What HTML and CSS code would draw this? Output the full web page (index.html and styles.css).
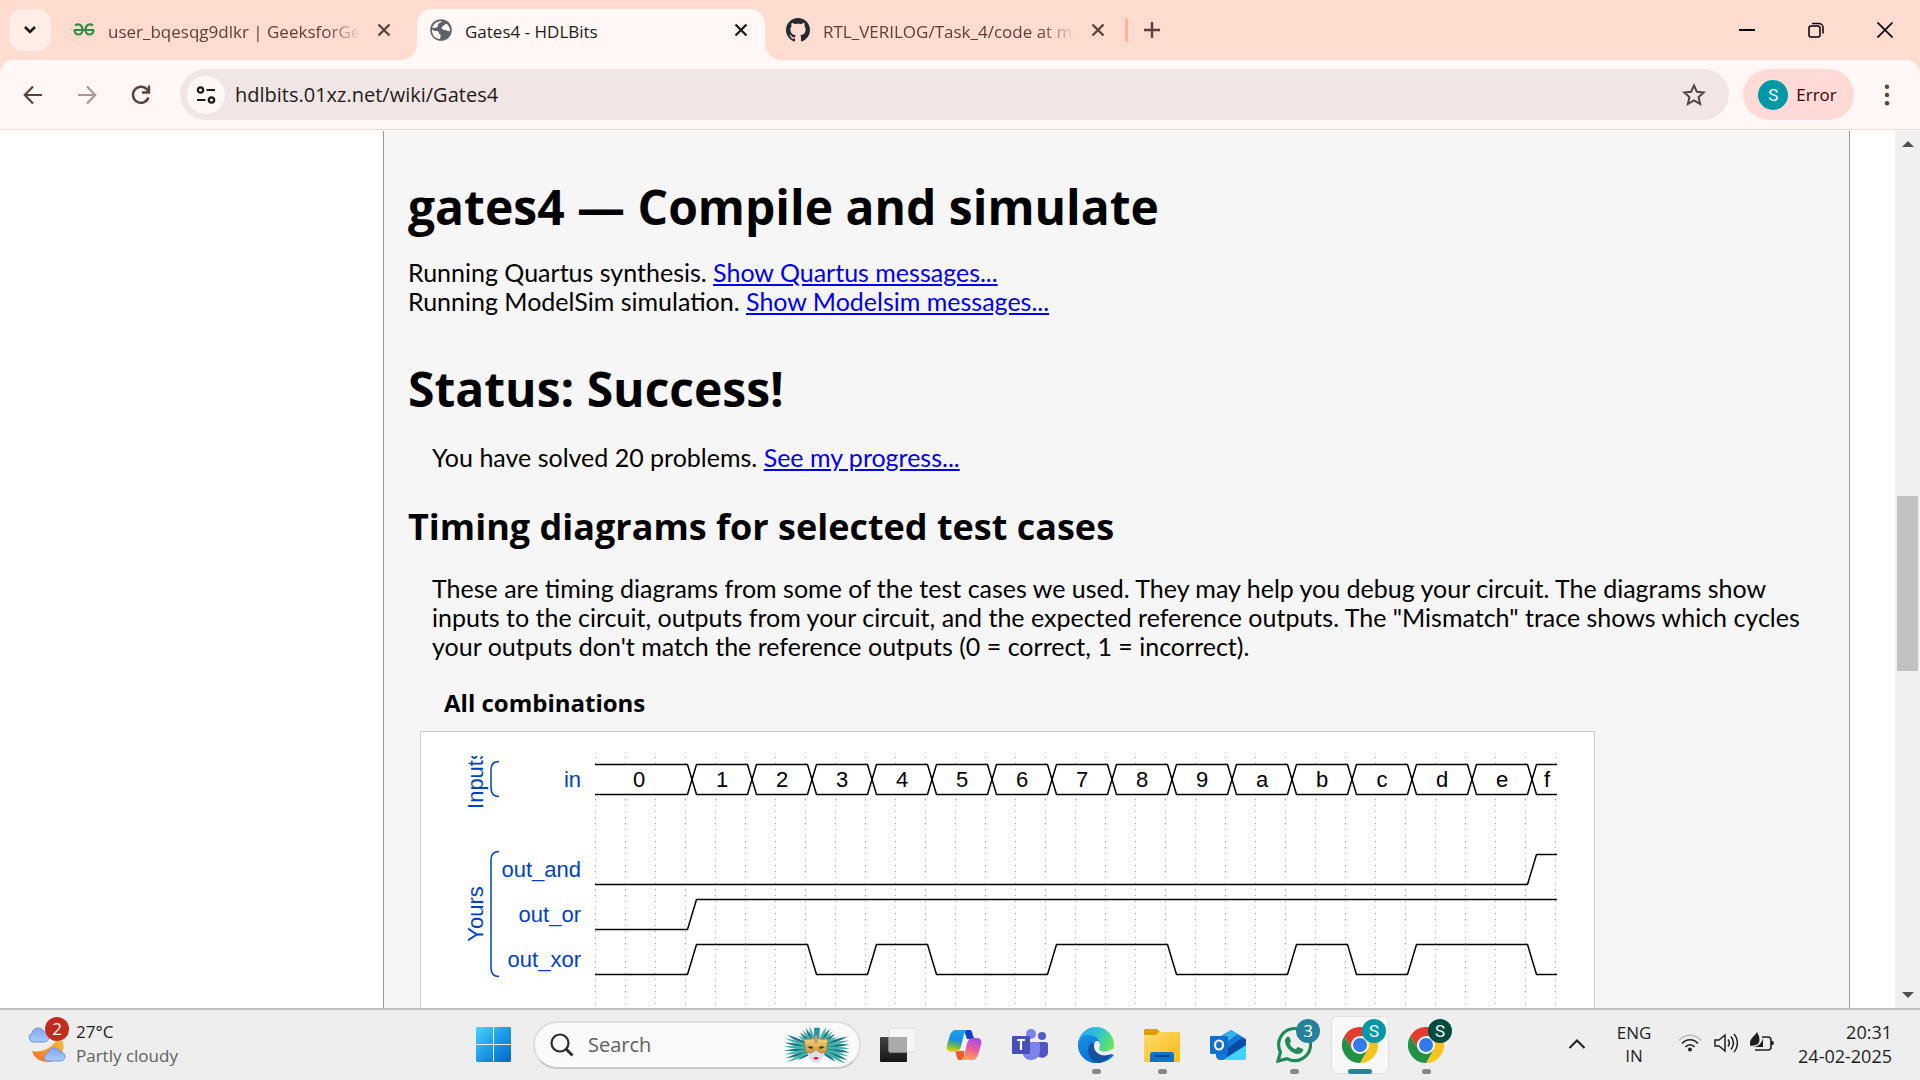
FILE: index.html
```html
<!DOCTYPE html>
<html lang="en">
<head>
<meta charset="utf-8">
<title>Gates4 - HDLBits</title>
<link rel="stylesheet" href="styles.css">
</head>
<body>
<div class="desktop">
  <header class="tabstrip">
    <button class="tab-search" aria-label="Search tabs"><svg width="14" height="10" viewBox="0 0 14 10"><path d="M2 2l5 5 5-5" fill="none" stroke="#1f1a18" stroke-width="2.6"/></svg></button>
    <div class="tab tab-first">
      <svg class="favicon" width="22" height="22" viewBox="0 0 22 22"><g fill="none" stroke="#2f8d46" stroke-width="2.2"><path d="M1 11h20M2 6.500C5 4 9.500 5.500 9.500 11c0 6-8 6-8 0M20 6.500C17 4 12.500 5.500 12.500 11c0 6 8 6 8 0"/></g></svg>
      <span class="tab-title">user_bqesqg9dlkr | GeeksforGeeks</span>
      <button class="tab-close" aria-label="Close tab"><svg width="14" height="14" viewBox="0 0 14 14"><path d="M1.500 1.500l11 11M12.500 1.500l-11 11" stroke="currentColor" stroke-width="2.300"/></svg></button>
    </div>
    <div class="tab tab-active">
      <svg class="favicon" width="22" height="22" viewBox="0 0 22 22"><circle cx="11" cy="11" r="10.800" fill="#5f6368"/><path d="M12 2c-1 2-4 2-4 4s-1 2-3 3l-3 0c0 3 3 3 5 3s2 2 2 3c2 0 2 2 1 5C5 20 2 16 2 11 2 6 6 2 12 2zM17 5c2 2 3 4 3 7-2 1-3-1-5-1s-4-1-3-3 3-1 3-3z" fill="#fff8f6"/></svg>
      <span class="tab-title">Gates4 - HDLBits</span>
      <button class="tab-close" aria-label="Close tab"><svg width="14" height="14" viewBox="0 0 14 14"><path d="M1.500 1.500l11 11M12.500 1.500l-11 11" stroke="currentColor" stroke-width="2.300"/></svg></button>
    </div>
    <div class="tab tab-last">
      <svg class="favicon" width="24" height="24" viewBox="0 0 16 16"><path fill="#24292f" d="M8 0C3.580 0 0 3.580 0 8c0 3.540 2.290 6.530 5.470 7.590.4.070.55-.17.55-.38 0-.19-.01-.82-.01-1.490-2.010.37-2.530-.49-2.690-.94-.09-.23-.48-.94-.82-1.130-.28-.15-.68-.52-.01-.53.63-.01 1.080.58 1.230.82.72 1.210 1.870.87 2.330.66.070-.52.28-.87.51-1.070-1.780-.2-3.640-.89-3.640-3.950 0-.87.31-1.590.82-2.150-.08-.2-.36-1.020.08-2.120 0 0 .67-.21 2.200.82.64-.18 1.320-.27 2-.27s1.360.09 2 .27c1.530-1.040 2.200-.82 2.200-.82.44 1.100.16 1.920.08 2.120.51.56.82 1.270.82 2.150 0 3.070-1.870 3.750-3.650 3.950.29.25.54.73.54 1.480 0 1.070-.01 1.930-.01 2.200 0 .21.15.46.55.38A8.010 8.010 0 0016 8c0-4.420-3.580-8-8-8z"/></svg>
      <span class="tab-title">RTL_VERILOG/Task_4/code at main</span>
      <button class="tab-close" aria-label="Close tab"><svg width="14" height="14" viewBox="0 0 14 14"><path d="M1.500 1.500l11 11M12.500 1.500l-11 11" stroke="currentColor" stroke-width="2.300"/></svg></button>
    </div>
    <span class="tab-divider"></span>
    <button class="new-tab" aria-label="New tab"><svg width="16" height="16" viewBox="0 0 16 16"><path d="M8 0v16M0 8h16" stroke="#5d4037" stroke-width="2.400"/></svg></button>
    <div class="window-buttons">
      <button aria-label="Minimize"><svg width="16" height="16" viewBox="0 0 16 16"><path d="M0 8h16" stroke="#000" stroke-width="2"/></svg></button>
      <button aria-label="Restore"><svg width="16" height="16" viewBox="0 0 16 16" fill="none" stroke="#000" stroke-width="1.500"><rect x="1" y="4" width="11" height="11" rx="2"/><path d="M4 1.500h7a4 4 0 0 1 4 4v6"/></svg></button>
      <button aria-label="Close"><svg width="16" height="16" viewBox="0 0 16 16"><path d="M.5.5l15 15M15.500.5l-15 15" stroke="#000" stroke-width="1.700"/></svg></button>
    </div>
  </header>

  <div class="toolbar-back">
  <div class="toolbar">
    <button class="nav-button" aria-label="Back"><svg width="20" height="20" viewBox="0 0 20 20" fill="none" stroke="#5d4037" stroke-width="2.200"><path d="M19 10H2M10 1.500L1.800 10 10 18.500"/></svg></button>
    <button class="nav-button" aria-label="Forward"><svg width="20" height="20" viewBox="0 0 20 20" fill="none" stroke="#a89896" stroke-width="2.200"><path d="M1 10h17M10 1.500l8.200 8.500-8.200 8.500"/></svg></button>
    <button class="nav-button" aria-label="Reload"><svg width="20" height="20" viewBox="0 0 20 20" fill="none" stroke="#5d4037" stroke-width="2.400"><path d="M17.500 12.500A8 8 0 1 1 16 4.500l1.500 2M18 .5v7h-7"/></svg></button>
    <div class="omnibox">
      <button class="site-info" aria-label="View site information"><svg width="20" height="20" viewBox="0 0 20 20" fill="none" stroke="#1f1a18" stroke-width="2.200"><circle cx="4.500" cy="5" r="2.700"/><path d="M10.500 5H19M1 15h8.500"/><circle cx="15.500" cy="15" r="2.700"/></svg></button>
      <input class="address" type="text" aria-label="Address" value="hdlbits.01xz.net/wiki/Gates4">
      <button class="bookmark" aria-label="Bookmark this tab"><svg width="24" height="24" viewBox="0 0 24 24"><path d="M12 2.500l2.900 6.300 6.800.7-5.100 4.600 1.500 6.900-6.100-3.600L5.900 21l1.500-6.900-5.100-4.600 6.800-.7z" fill="none" stroke="#53433f" stroke-width="2"/></svg></button>
    </div>
    <button class="profile"><span class="avatar">S</span>Error</button>
    <button class="menu" aria-label="Menu"><svg width="6" height="22" viewBox="0 0 6 22" fill="#5d4037"><circle cx="3" cy="2.800" r="2.200"/><circle cx="3" cy="11" r="2.200"/><circle cx="3" cy="19.200" r="2.200"/></svg></button>
  </div>
  </div>

  <div class="viewport">
    <main class="article">
      <h1>gates4 — Compile and simulate</h1>
      <p class="log">Running Quartus synthesis. <a href="#quartus">Show Quartus messages...</a><br>Running ModelSim simulation. <a href="#modelsim">Show Modelsim messages...</a></p>
      <h1>Status: Success!</h1>
      <p class="note">You have solved 20 problems. <a href="#progress">See my progress...</a></p>
      <h2>Timing diagrams for selected test cases</h2>
      <p class="note">These are timing diagrams from some of the test cases we used. They may help you debug your circuit. The diagrams show inputs to the circuit, outputs from your circuit, and the expected reference outputs. The "Mismatch" trace shows which cycles your outputs don't match the reference outputs (0 = correct, 1 = incorrect).</p>
      <h3>All combinations</h3>
      <div class="wave-card">
        <svg class="wave" width="1125" height="420" viewBox="0 0 1125 420" role="img" aria-label="Timing diagram, all combinations">
          <defs><path id="cell" d="M247 23.500L251.500 8.500H302.500L307 23.500 302.500 38.500H251.500Z"/></defs>
          <path class="wave-grid" d="M150.500 0V420M180.500 0V420M210.500 0V420M240.500 0V420M270.500 0V420M300.500 0V420M330.500 0V420M360.500 0V420M390.500 0V420M420.500 0V420M450.500 0V420M480.500 0V420M510.500 0V420M540.500 0V420M570.500 0V420M600.500 0V420M630.500 0V420M660.500 0V420M690.500 0V420M720.500 0V420M750.500 0V420M780.500 0V420M810.500 0V420M840.500 0V420M870.500 0V420M900.500 0V420M930.500 0V420M960.500 0V420M990.500 0V420M1020.500 0V420M1050.500 0V420M1080.500 0V420M1110.500 0V420"/>
          <g class="wave-bus">
            <path d="M150 8.500H242.500L247 23.500 242.500 38.500H150"/>
            <use href="#cell"/><use href="#cell" x="60"/><use href="#cell" x="120"/><use href="#cell" x="180"/><use href="#cell" x="240"/><use href="#cell" x="300"/><use href="#cell" x="360"/><use href="#cell" x="420"/><use href="#cell" x="480"/><use href="#cell" x="540"/><use href="#cell" x="600"/><use href="#cell" x="660"/><use href="#cell" x="720"/><use href="#cell" x="780"/>
            <path d="M1112 8.500H1091.500L1087 23.500 1091.500 38.500H1112"/>
          </g>
          <g class="wave-line">
            <path d="M150 128.500H1082.500L1091.500 98.500H1112"/>
            <path d="M150 173.500H242.500L251.500 143.500H1112"/>
            <path d="M150 218.500H242.500L251.500 188.500H362.500L371.500 218.500H422.500L431.500 188.500H482.500L491.500 218.500H602.500L611.500 188.500H722.500L731.500 218.500H842.500L851.500 188.500H902.500L911.500 218.500H962.500L971.500 188.500H1082.500L1091.500 218.500H1112"/>
          </g>
          <g class="wave-value">
            <text x="194" y="31">0</text><text x="277" y="31">1</text><text x="337" y="31">2</text><text x="397" y="31">3</text><text x="457" y="31">4</text><text x="517" y="31">5</text><text x="577" y="31">6</text><text x="637" y="31">7</text><text x="697" y="31">8</text><text x="757" y="31">9</text><text x="817" y="31">a</text><text x="877" y="31">b</text><text x="937" y="31">c</text><text x="997" y="31">d</text><text x="1057" y="31">e</text><text x="1102" y="31">f</text>
          </g>
          <g class="wave-name">
            <text x="136" y="31">in</text><text x="136" y="121">out_and</text><text x="136" y="166">out_or</text><text x="136" y="211">out_xor</text>
          </g>
          <g class="wave-group">
            <text transform="translate(38 23) rotate(-90)">Inputs</text>
            <text transform="translate(38 158) rotate(-90)">Yours</text>
          </g>
          <path class="wave-brace" d="M54 5.500Q46 5.500 46 14V32Q46 40.500 54 40.500M54 95.500Q46 95.500 46 104V212Q46 220.500 54 220.500"/>
        </svg>
      </div>
    </main>
    <div class="scrollbar">
      <button aria-label="Scroll up"><svg width="12" height="6" viewBox="0 0 12 6"><path d="M0 6L6 0l6 6z" fill="#505050"/></svg></button>
      <div class="scroll-thumb"></div>
      <button aria-label="Scroll down"><svg width="12" height="6" viewBox="0 0 12 6"><path d="M0 0h12L6 6z" fill="#505050"/></svg></button>
    </div>
  </div>

  <footer class="taskbar">
    <button class="weather">
      <svg width="42" height="46" viewBox="0 0 42 46">
        <defs><linearGradient id="moon" x1="0" y1="1" x2="1" y2="0"><stop offset="0" stop-color="#f36f21"/><stop offset="1" stop-color="#f8b93c"/></linearGradient><linearGradient id="cloud" x1="0" y1="0" x2="0" y2="1"><stop offset="0" stop-color="#7fa8ee"/><stop offset="1" stop-color="#a9cbfa"/></linearGradient></defs>
        <path d="M4 30c9 2 18-2 24-10l7 0c2 12-4 21-15 21C12 41 6 37 4 30z" fill="url(#moon)"/>
        <path d="M4 21a5 5 0 0 1 0-9c1-6 10-7 12-1 6-1 7 10 0 10z" fill="url(#cloud)" stroke="#7396dc"/>
        <path d="M19 40c-4-1-3-7 1-8 1-6 10-7 12-1 6 0 7 8 1 9z" fill="url(#cloud)" stroke="#7396dc"/>
      </svg>
      <span class="weather-badge">2</span>
      <span class="weather-text"><span class="weather-temp">27°C</span><span class="weather-sky">Partly cloudy</span></span>
    </button>

    <nav class="apps">
      <button class="app" aria-label="Start"><svg width="36" height="36" viewBox="0 0 36 36"><defs><linearGradient id="win" x1="0" y1="0" x2="1" y2="1"><stop offset="0" stop-color="#4cd3ff"/><stop offset=".5" stop-color="#1b9be8"/><stop offset="1" stop-color="#0067c8"/></linearGradient></defs><path d="M1 0h16v17H0V1zM18 0h16l1 1v16H18zM0 18h17v17H1l-1-1zM18 18h17v16l-1 1H18z" fill="url(#win)"/></svg></button>
      <label class="search">
        <svg width="24" height="24" viewBox="0 0 24 24" fill="none" stroke="#2b2b2b" stroke-width="2.200"><circle cx="10" cy="10" r="8.500"/><path d="M16 16l6.500 6.500" stroke-width="2.800"/></svg>
        <input type="text" placeholder="Search" aria-label="Search">
        <svg class="mask" width="72" height="40" viewBox="0 0 72 40">
          <defs><path id="f1" d="M36 23Q33 10 37 0Q39 12 36 23z"/><path id="f2" d="M36 23Q33 5 37-10Q39 5 36 23z"/><linearGradient id="gold" x1="0" y1="0" x2="0" y2="1"><stop offset="0" stop-color="#f3d27c"/><stop offset="1" stop-color="#cf9a3c"/></linearGradient></defs>
          <g fill="#1b7486"><use href="#f1" transform="rotate(-124 36 23)"/><use href="#f2" transform="rotate(-110 36 23)"/><use href="#f2" transform="rotate(-96 36 23)"/><use href="#f2" transform="rotate(-82 36 23)"/><use href="#f2" transform="rotate(-68 36 23)"/><use href="#f1" transform="rotate(-50 36 23)"/><use href="#f1" transform="rotate(-32 36 23)"/><use href="#f1" transform="rotate(32 36 23)"/><use href="#f1" transform="rotate(50 36 23)"/><use href="#f2" transform="rotate(68 36 23)"/><use href="#f2" transform="rotate(82 36 23)"/><use href="#f2" transform="rotate(96 36 23)"/><use href="#f2" transform="rotate(110 36 23)"/><use href="#f1" transform="rotate(124 36 23)"/></g>
          <g fill="#45b3ac"><use href="#f2" transform="rotate(-117 36 23)"/><use href="#f2" transform="rotate(-103 36 23)"/><use href="#f2" transform="rotate(-89 36 23)"/><use href="#f2" transform="rotate(-75 36 23)"/><use href="#f1" transform="rotate(-59 36 23)"/><use href="#f1" transform="rotate(-41 36 23)"/><use href="#f1" transform="rotate(-22 36 23)"/><use href="#f1" transform="rotate(22 36 23)"/><use href="#f1" transform="rotate(41 36 23)"/><use href="#f1" transform="rotate(59 36 23)"/><use href="#f2" transform="rotate(75 36 23)"/><use href="#f2" transform="rotate(89 36 23)"/><use href="#f2" transform="rotate(103 36 23)"/><use href="#f2" transform="rotate(117 36 23)"/></g>
          <path d="M33 3q3-1 6 0l-1 12h-5z" fill="#2c93a3"/>
          <path d="M26 24c0 8 4 13 9 14 5-1 9-6 9-14z" fill="#dcdde8"/>
          <path d="M23 14q6 1 12-1 6 2 12 1-1 7-2 13-5 2-7 0-1-2-3-2t-3 2q-2 2-7 0-1-6-2-13z" fill="url(#gold)" stroke="#a97b2c" stroke-width=".8"/>
          <path d="M26.500 22q4-2 6 1-3 2-6-1zM43.500 22q-4-2-6 1 3 2 6-1z" fill="#3a3340"/>
          <path d="M32 33q3-2 6 0-3 3-6 0z" fill="#d11d3f"/><path d="M35 9q3 5 1.500 9h-3Q32 14 35 9z" fill="#c89a6c"/>
        </svg>
      </label>
      <button class="app" aria-label="Task view"><svg width="36" height="36" viewBox="0 0 36 36"><defs><linearGradient id="tv" x1="0" y1="0" x2="0" y2="1"><stop offset="0" stop-color="#444"/><stop offset="1" stop-color="#161616"/></linearGradient></defs><rect x="0" y="10" width="27" height="25" rx="1" fill="url(#tv)"/><rect x="9" y="1" width="27" height="24" rx="1" fill="#f6f6f6" stroke="#ddd"/><path d="M9 10h18v15H9z" fill="#aaa"/></svg></button>
      <button class="app" aria-label="Copilot"><svg width="36" height="36" viewBox="0 0 36 36"><defs><linearGradient id="cp1" x1=".5" y1="0" x2=".3" y2="1"><stop offset="0" stop-color="#18a0f4"/><stop offset=".45" stop-color="#1a8fe0"/><stop offset=".7" stop-color="#62b45a"/><stop offset="1" stop-color="#f6d500"/></linearGradient><linearGradient id="cp2" x1=".7" y1="0" x2=".4" y2="1"><stop offset="0" stop-color="#a44bed"/><stop offset=".5" stop-color="#ef5a9a"/><stop offset="1" stop-color="#ffa552"/></linearGradient></defs><path d="M18 3h6c3 0 2 8 6 9h-9z" fill="#1240c0"/><path d="M18 33h-5c-3 0-2-8-5-9h10z" fill="#ee5b32"/><path d="M10 3h12c-4 0-4 5-6 12-1 6-3 10-6 10H5c-4 0-5-3-4-7l3-10c1-3 3-5 6-5z" fill="url(#cp1)"/><path d="M26 33H14c4 0 4-5 6-12 1-6 3-10 6-10h5c4 0 5 3 4 7l-3 10c-1 3-3 5-6 5z" fill="url(#cp2)"/><path d="M17.500 12H22c-2 2-3 8-4 12h-4.500c2-2 3-8 4-12z" fill="#f4f4f4"/></svg></button>
      <button class="app" aria-label="Teams"><svg width="36" height="36" viewBox="0 0 36 36"><circle cx="30" cy="9" r="4" fill="#5059c9"/><path d="M25 15h9c1 0 2 1 2 2v7a6 6 0 0 1-11 4z" fill="#4f56c4"/><circle cx="19" cy="7" r="5" fill="#7b83eb"/><path d="M11 15h15c1 0 2 1 2 2v8a9 9 0 0 1-17 3z" fill="#7b83eb"/><rect y="9" width="18" height="18" rx="1" fill="#464eb8"/><path d="M5 13h8M9 13v10" stroke="#fff" stroke-width="2.200"/></svg></button>
      <button class="app running" aria-label="Edge"><svg width="36" height="36" viewBox="0 0 36 36"><defs><linearGradient id="ed1" x1="0" y1="0" x2="1" y2=".5"><stop offset="0" stop-color="#2a9ff0"/><stop offset=".5" stop-color="#2dc2dc"/><stop offset="1" stop-color="#6be84d"/></linearGradient><linearGradient id="ed2" x1="0" y1="0" x2=".5" y2="1"><stop offset="0" stop-color="#1b8fe0"/><stop offset="1" stop-color="#0a6fd0"/></linearGradient></defs><circle cx="18" cy="18" r="18" fill="url(#ed1)"/><path d="M0 18C0 11 5 8 11 8c6 0 11 4 11 10 0 3-2 4-1 6h15v4c-4 5-10 8-18 8C8 36 0 28 0 18z" fill="url(#ed2)"/><path d="M13 16c-6 6-2 18 8 20 5-1 9-4 12-9-8 2-17-1-17-10z" fill="#1151a0"/><path d="M16 19c0-3 1-5 3-5 2 0 3 2 3 4 0 3-2 4 0 5.500 2 1.500 8 1 12-1.500h3l-1 6-3-1c-9 4-17-1-17-8z" fill="#eee"/></svg></button>
      <button class="app running" aria-label="File Explorer"><svg width="36" height="36" viewBox="0 0 36 36"><defs><linearGradient id="fo" x1="0" y1="0" x2="1" y2="1"><stop offset="0" stop-color="#ffdc6e"/><stop offset="1" stop-color="#fbb917"/></linearGradient></defs><path d="M0 3l1-1h12l3 3-3 4H0z" fill="#dd9d05"/><path d="M0 8h12l3-3h21v30H0z" fill="url(#fo)"/><path d="M6 35v-7c0-2 1-3 3-3h18c2 0 3 1 3 3v7z" fill="#0c74ca"/><path d="M11 29h14" stroke="#07498e" stroke-width="2"/></svg></button>
      <button class="app" aria-label="Outlook"><svg width="36" height="36" viewBox="0 0 36 36"><path d="M6 12L21 3l15 9v17c0 2-1 4-4 4H10c-2 0-4-2-4-4z" fill="#1478d4"/><path d="M11 10L21 3l7 4-13 9z" fill="#35b3ee"/><path d="M36 13v6L18 30l-4-6 18-13z" fill="#0a4aa5"/><path d="M36 18v12c0 2-1 3-3 3H13z" fill="#41d4f9"/><rect y="9" width="18" height="18" rx="1" fill="#1070cf"/><ellipse cx="9" cy="18" rx="4" ry="4.500" fill="none" stroke="#fff" stroke-width="2.200"/></svg></button>
      <button class="app running" aria-label="WhatsApp"><svg width="36" height="36" viewBox="0 0 36 36"><path d="M2 34l2.500-9A16 16 0 1 1 11 31.600z" fill="none" stroke="#1f8a56" stroke-width="3.200"/><path d="M11 10c2-1 3 0 4 4 0 1-2 2-1 3 1 3 3 4 5 5 2 0 2-2 3-2l5 2c1 2-2 5-5 5C16 27 9 20 9 14c0-2 1-3 2-4z" fill="#1f8a56"/></svg><span class="badge badge-count">3</span></button>
      <button class="app active" aria-label="Chrome"><svg width="36" height="36" viewBox="0 0 36 36"><g id="chrome"><path d="M2.400 9A18 18 0 0 1 33.600 9H18L10.200 22.500z" fill="#e33b2e"/><path d="M33.600 9A18 18 0 0 1 18 36l7.800-13.500L25.800 9z" fill="#fcc31e"/><path d="M2.400 9A18 18 0 0 0 18 36l7.800-13.500H10.200z" fill="#219245"/><circle cx="18" cy="18" r="9" fill="#fff"/><circle cx="18" cy="18" r="7" fill="#3279ea"/></g></svg><span class="badge badge-teal">S</span></button>
      <button class="app running" aria-label="Chrome, second profile"><svg width="36" height="36" viewBox="0 0 36 36"><use href="#chrome"/></svg><span class="badge badge-green">S</span></button>
    </nav>

    <div class="tray">
      <button class="tray-more" aria-label="Show hidden icons"><svg width="18" height="12" viewBox="0 0 18 12"><path d="M1.500 10L9 2.500l7.500 7.500" fill="none" stroke="#1f1f1f" stroke-width="2"/></svg></button>
      <button class="language"><span>ENG</span><span>IN</span></button>
      <button class="status" aria-label="Network, volume and battery">
        <svg width="24" height="24" viewBox="0 0 24 24" fill="none" stroke="#1f1f1f" stroke-width="1.600"><path d="M1 8.500c6-7 16-7 22 0" stroke="#bdbdbd"/><path d="M4 11.500c4.500-5 11.500-5 16 0M7.500 15c2.500-3 6.500-3 9 0"/><circle cx="12" cy="17.500" r="2" fill="#1f1f1f" stroke="none"/></svg>
        <svg width="24" height="24" viewBox="0 0 24 24" fill="none" stroke="#1f1f1f" stroke-width="1.500"><path d="M1 8h4l6-5v16l-6-5H1zM14 7.500c1.500 2 1.500 5 0 7M17 4.500c3 4 3 9 0 13M20 2c4.500 5 4.500 13 0 18"/></svg>
        <svg width="24" height="24" viewBox="0 0 24 24"><path d="M12 5h6c2 0 3 1 3 3v7c0 2-1 3-3 3H5" fill="none" stroke="#1f1f1f" stroke-width="1.600"/><path d="M21 9h2l1 2-1 2h-2zM0 13C-1 7 4 5 7 0c3 5 4 11-1 13l-5 1zM13 6v9H3c5 0 9-4 10-9z" fill="#1f1f1f"/></svg>
      </button>
      <button class="clock"><span>20:31</span><span>24-02-2025</span></button>
    </div>
  </footer>
</div>
</body>
</html>
```
FILE: styles.css
```css
* { box-sizing: border-box; }
body { margin: 0; font-family: "Open Sans", "Noto Sans", sans-serif; font-size: 17px; color: #1f1a18; }
button { display: flex; align-items: center; justify-content: center; border: 0; padding: 0; background: none; font: inherit; color: inherit; }
input { border: 0; padding: 0; background: none; font: inherit; color: inherit; outline: 0; min-width: 0; }
svg { display: block; flex: none; }

.desktop { display: flex; flex-direction: column; height: 100vh; overflow: hidden; background: #fff; }

/* Tab strip */
.tabstrip { display: flex; flex: none; height: 60px; background: #ffdbd0; }
.tab-search { width: 42px; height: 42px; margin: 9px 7px 0 9px; border-radius: 14px; background: #ffede8; }
.tab { display: flex; align-items: center; height: 51px; margin-top: 9px; color: #5d4037; padding-bottom: 9px; }
.tab-first { width: 359px; padding-left: 15px; padding-right: 26px; }
.tab-active { width: 348px; padding-left: 13px; padding-right: 17px; color: #1f1a18; background: #fff8f6; border-radius: 15px 15px 0 0; position: relative; }
.tab-active::before, .tab-active::after { content: ""; position: absolute; bottom: 0; width: 15px; height: 15px; }
.tab-active::before { right: 100%; background: radial-gradient(circle at 0 0, #ffdbd0 14px, #fff8f6 15px); }
.tab-active::after { left: 100%; background: radial-gradient(circle at 100% 0, #ffdbd0 14px, #fff8f6 15px); }
.tab-last { width: 360px; padding-left: 21px; padding-right: 20px; }
.tab-title { flex: 1; margin: 0 16px 0 13px; padding-top: 3px; min-width: 0; overflow: hidden; white-space: nowrap; font-size: 17px; line-height: 24px; }
.tab-first .tab-title, .tab-last .tab-title { -webkit-mask-image: linear-gradient(90deg, #000 86%, transparent); mask-image: linear-gradient(90deg, #000 86%, transparent); }
.tab-close { width: 14px; height: 14px; }
.tab-divider { width: 3px; height: 24px; margin-top: 18px; border-radius: 2px; background: #ffb59d; }
.new-tab { width: 48px; height: 60px; }
.window-buttons { display: flex; margin-left: auto; padding-right: 1px; }
.window-buttons button { width: 69px; height: 60px; }

/* Toolbar */
.toolbar-back { flex: none; background: #ffdbd0; }
.toolbar { display: flex; align-items: center; height: 70px; padding: 0 18px 0 6px; background: #fff8f6; border-bottom: 1px solid #f0dcda; border-radius: 14px 14px 0 0; }
.nav-button { width: 54px; height: 51px; }
.omnibox { display: flex; align-items: center; flex: 1; height: 51px; margin: 0 14px 0 12px; padding: 0 21px 0 7px; border-radius: 26px; background: #f1e6e5; }
.site-info { width: 38px; height: 38px; border-radius: 50%; background: #fff8f6; }
.address { flex: 1; margin-left: 10px; font-size: 20px; line-height: 28px; }
.bookmark { width: 28px; height: 28px; }
.profile { gap: 8px; width: 111px; height: 51px; padding-right: 2px; border-radius: 26px; background: #ffdad7; color: #410006; }
.avatar { width: 30px; height: 30px; border-radius: 50%; background: #0097a7; color: #fff; line-height: 30px; font-family: Roboto, sans-serif; }
.menu { width: 30px; height: 51px; margin-left: 18px; }

/* Page */
.viewport { display: flex; flex: 1; min-height: 0; overflow: hidden; padding-left: 383px; border-top: 1px solid #fff; }
.article { flex: 1; min-width: 0; margin-right: 45px; padding: 43px 24px 0; border: solid #999; border-width: 0 1px; background: #f6f6f6; color: #000; font-family: Lato, "Open Sans", sans-serif; font-size: 25px; line-height: 29px; overflow: hidden; }
.article a { color: #00e; }
.article h1, .article h2, .article h3 { font-family: "Open Sans", sans-serif; font-weight: 700; }
.article h1 { margin: 0; font-size: 48px; line-height: 66px; }
.article h2 { margin: 31px 0 23px; font-size: 36px; line-height: 48px; }
.article h3 { margin: 26px 36px 12px; font-size: 24px; line-height: 32px; }
.log { margin: 18px 0 40px; }
.note { margin: 21px 0 0 24px; }
.wave-card { width: max-content; margin-left: 12px; padding: 24px; border: 1px solid #ccc; background: #fff; }
.wave { overflow: hidden; font-family: "Liberation Sans", Arial, sans-serif; font-size: 22px; }
.wave-grid { fill: none; stroke: #999; stroke-width: 1; stroke-dasharray: 1 5; stroke-dashoffset: -1; }
.wave-bus { fill: #fff; stroke: #000; stroke-width: 1.5px; }
.wave-line { fill: none; stroke: #000; stroke-width: 1.5px; }
.wave-value { text-anchor: middle; }
.wave-name { text-anchor: end; fill: #0041c4; }
.wave-group { text-anchor: middle; fill: #0041c4; }
.wave-brace { fill: none; stroke: #0041c4; stroke-width: 1.5px; }

.scrollbar { display: flex; flex-direction: column; flex: none; width: 25px; padding: 0 2px; background: #f0f0f0; }
.scrollbar button { height: 26px; }
.scroll-thumb { height: 20%; margin-top: 339px; margin-bottom: auto; background: #c1c1c1; }

/* Taskbar */
.taskbar { display: grid; grid-template-columns: 1fr auto 1fr; flex: none; height: 72px; border-top: 2px solid #bebebe; background: #eee; color: #1f1f1f; }
.weather { position: relative; justify-self: start; gap: 6px; height: 68px; padding-left: 28px; text-align: left; }
.weather-badge { position: absolute; left: 45px; top: 7px; width: 24px; height: 24px; border-radius: 50%; background: #c42b1c; color: #fff; font-size: 17px; line-height: 24px; text-align: center; }
.weather-text { display: flex; flex-direction: column; line-height: 24px; }
.weather-sky { color: #616161; }
.apps { display: flex; align-items: center; }
.app { position: relative; width: 66px; height: 58px; }
.app.running::after, .app.active::after { content: ""; position: absolute; bottom: 0; left: 50%; width: 9px; height: 5px; border-radius: 3px; margin-left: -4px; background: #868686; }
.app.active::before { content: ""; position: absolute; inset: 0 4px; border-radius: 6px; border: 1px solid #e0e0e0; background: #f8f8f8; }
.app.active svg { position: relative; }
.app.active::after { width: 24px; margin-left: -12px; background: #2a8396; }
.badge { position: absolute; right: 7px; top: 3px; width: 24px; height: 24px; border-radius: 50%; color: #fff; font-size: 17px; line-height: 24px; text-align: center; }
.badge-count { background: #26829a; }
.badge-teal { background: #0097a7; font-family: Roboto, sans-serif; }
.badge-green { background: #004d40; font-family: Roboto, sans-serif; }
.search { display: flex; align-items: center; width: 328px; height: 48px; margin: 0 4px 0 6px; padding: 0 6px 0 15px; border: 2px solid #dfdfdf; border-bottom-color: #c8c8c8; border-radius: 24px; background: #fafafa; }
.search input { flex: 1; margin-left: 14px; font-size: 20px; line-height: 28px; }
.search input::placeholder { color: #606060; opacity: 1; }
.tray { display: flex; justify-content: flex-end; align-items: center; height: 68px; padding-right: 28px; }
.tray-more { width: 44px; height: 58px; }
.language { flex-direction: column; width: 60px; margin-left: 5px; font-size: 17px; line-height: 23px; }
.status { gap: 12px; margin: 0 24px 0 14px; }
.clock { flex-direction: column; align-items: flex-end; font-size: 18px; line-height: 24px; }
```
